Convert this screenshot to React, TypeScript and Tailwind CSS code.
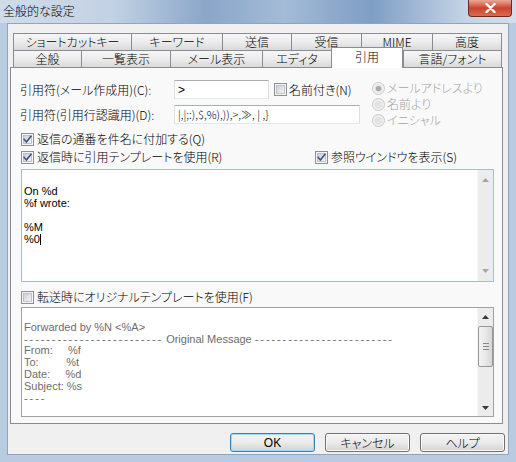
import React from "react";

const jp = "font-['Noto_Sans_CJK_JP',sans-serif] [font-feature-settings:'palt'] font-light";
const en = "font-['Liberation_Sans',Arial,sans-serif] font-normal";

const row1 = [
  { label: "ショートカットキー", w: "w-[118px]" },
  { label: "キーワード", w: "w-[91px]" },
  { label: "送信", w: "w-[69px]" },
  { label: "受信", w: "w-[70px]" },
  { label: "MIME", w: "w-[71px]" },
  { label: "高度", w: "w-[70px]" },
];

const row2 = [
  { label: "全般", w: "w-[68px]" },
  { label: "一覧表示", w: "w-[89px]" },
  { label: "メール表示", w: "w-[92px]" },
  { label: "エディタ", w: "w-[69px]" },
  { label: "引用", w: "w-[72px]", active: true },
  { label: "言語/フォント", w: "w-[99px]" },
];

function Check({ checked = false }: { checked?: boolean }) {
  return (
    <svg width="13" height="13" viewBox="0 0 13 13" className="shrink-0">
      <defs>
        <linearGradient id="cbfill" x1="0" y1="0" x2="1" y2="1">
          <stop offset="0" stopColor="#c9ced6" />
          <stop offset="1" stopColor="#f6f6f6" />
        </linearGradient>
      </defs>
      <rect x="0.5" y="0.5" width="12" height="12" fill="#f5f5f5" stroke="#8e8f8f" />
      <rect x="2.5" y="2.5" width="8" height="8" fill="url(#cbfill)" stroke="#b4b8be" strokeWidth="0.8" />
      {checked && (
        <path d="M3.2 6.4 L5.4 9 L9.9 3.4" fill="none" stroke="#3c528a" strokeWidth="1.6" strokeLinecap="square" />
      )}
    </svg>
  );
}

function Radio({ selected = false }: { selected?: boolean }) {
  return (
    <svg width="13" height="13" viewBox="0 0 13 13" className="shrink-0">
      <circle cx="6.5" cy="6.5" r="6" fill="#f2f2f2" stroke="#c8c8c8" />
      <circle cx="6.5" cy="6.5" r="4" fill="#e4e4e4" />
      {selected && <circle cx="6.5" cy="6.5" r="2.6" fill="#a8a8a8" />}
    </svg>
  );
}

function Arrow({ up = false, color = "#9a9a9a" }: { up?: boolean; color?: string }) {
  return (
    <svg width="7" height="4" viewBox="0 0 7 4">
      <path d={up ? "M0 4 L3.5 0 L7 4 Z" : "M0 0 L7 0 L3.5 4 Z"} fill={color} />
    </svg>
  );
}

function CheckRow({ checked, label }: { checked?: boolean; label: string }) {
  return (
    <div className="flex items-center gap-[3px] h-[18px]">
      <Check checked={checked} />
      <span className="text-[12px] text-black leading-none">{label}</span>
    </div>
  );
}

function Btn({ children, def = false }: { children: React.ReactNode; def?: boolean }) {
  return (
    <button
      className={`w-[85px] h-[19px] flex items-center justify-center rounded-[3px] border bg-gradient-to-b from-[#f3f3f3] via-[#ebebeb] to-[#d2d2d2] text-[12px] leading-none text-black ${
        def ? "border-[#3c7fb1] shadow-[inset_0_0_0_1px_#9fdcf7]" : "border-[#707070] shadow-[inset_0_0_0_1px_#fbfbfb]"
      }`}
    >
      {children}
    </button>
  );
}

export default function App() {
  return (
    <div className={`w-[516px] h-[462px] flex flex-col bg-[#b9cbe0] ${jp}`}>
      {/* title bar */}
      <div className="h-[23px] shrink-0 flex items-start justify-between bg-[linear-gradient(90deg,#d0dcea_0%,#c2d1e3_22%,#8aa6c8_40%,#a3bbd6_55%,#7f9ec4_72%,#c4d3e5_90%,#d2deeb_100%)]">
        <span className="pl-[3px] pt-[3px] text-[12px] leading-[16px] text-black">全般的な設定</span>
        <div className="mr-[4px] w-[44px] h-[17px] flex items-center justify-center rounded-b-[4px] border border-t-0 border-[#6f2a20] bg-gradient-to-b from-[#e9a896] via-[#c8442d] to-[#d86a50]">
          <svg width="11" height="10" viewBox="0 0 11 10">
            <path d="M1.5 1 L9.5 9 M9.5 1 L1.5 9" stroke="#ffffff" strokeWidth="2.4" strokeLinecap="round" />
          </svg>
        </div>
      </div>

      {/* client area */}
      <div className="flex-1 mx-[7px] mb-[7px] border border-[#8fa4bf] bg-[#f0f0f0] flex flex-col pt-[9px] pl-[2px]">
        {/* tabs */}
        <div className="ml-[3px] flex flex-col w-[489px]">
          <div className="flex h-[17px]">
            {row1.map((t) => (
              <div
                key={t.label}
                className={`${t.w} h-full flex items-center justify-center border-t border-l last:border-r border-[#898c95] bg-gradient-to-b from-[#f6f6f6] via-[#ececec] to-[#d9d9d9] text-[12px] leading-none text-black`}
              >
                {t.label}
              </div>
            ))}
          </div>
          <div className="flex items-end h-[17px]">
            {row2.map((t) =>
              t.active ? (
                <div
                  key={t.label}
                  className={`${t.w} h-[21px] -mb-px relative z-10 flex items-start justify-center pt-[2px] border-t border-x border-[#898c95] bg-white text-[12px] leading-[14px] text-black`}
                >
                  {t.label}
                </div>
              ) : (
                <div
                  key={t.label}
                  className={`${t.w} h-full flex items-center justify-center border-t border-l last:border-r border-[#898c95] bg-gradient-to-b from-[#f6f6f6] via-[#ececec] to-[#d9d9d9] text-[12px] leading-none text-black`}
                >
                  {t.label}
                </div>
              )
            )}
          </div>
        </div>

        {/* panel */}
        <div className="w-[493px] h-[357px] border border-[#898c95] bg-[#f9f9f9] pl-[10px] pt-[12px] flex flex-col">
          <div className="flex items-start">
            <div className="w-[351px] flex flex-col gap-[6px]">
              <div className="flex items-center h-[19px]">
                <span className="w-[154px] -ml-px text-[12px] leading-none text-black">引用符(メール作成用)(C):</span>
                <div className={`w-[95px] h-[19px] flex items-center px-[3px] bg-white border border-[#abadb3] border-x-[#dbdfe6] border-b-[#e3e9ef] text-[12px] ${en}`}>
                  &gt;
                </div>
                <div className="ml-[5px] flex items-center gap-[2px]">
                  <Check />
                  <span className="text-[12px] leading-none text-black">名前付き(N)</span>
                </div>
              </div>
              <div className="flex items-center h-[19px]">
                <span className="w-[154px] -ml-px text-[12px] leading-none text-black">引用符(引用行認識用)(D):</span>
                <div className={`w-[186px] h-[19px] flex items-center px-[3px] bg-white border border-[#abadb3] border-x-[#dbdfe6] border-b-[#e3e9ef] text-[11px] whitespace-pre text-black`}>
                  |,|;:),$,%),)),&gt;,≫, | ,{"}"}
                </div>
              </div>
            </div>
            <div className="flex flex-col">
              {[
                { l: "メールアドレスより", s: true },
                { l: "名前より", s: false },
                { l: "イニシャル", s: false },
              ].map((r) => (
                <div key={r.l} className="flex items-center gap-[2px] h-[16px]">
                  <Radio selected={r.s} />
                  <span className="text-[12px] leading-none text-[#a3a3a3]">{r.l}</span>
                </div>
              ))}
            </div>
          </div>

          <div className="mt-[2px]">
            <CheckRow checked label="返信の通番を件名に付加する(Q)" />
          </div>
          <div className="flex">
            <div className="w-[294px]">
              <CheckRow checked label="返信時に引用テンプレートを使用(R)" />
            </div>
            <CheckRow checked label="参照ウインドウを表示(S)" />
          </div>

          {/* reply template */}
          <div className="mt-[3px] w-[473px] h-[113px] flex border border-[#a7bbd3] bg-white">
            <div className={`flex-1 pl-[2px] pt-[3px] text-[11px] leading-[12px] text-black whitespace-pre ${en}`}>
              {"\nOn %d\n%f wrote:\n\n%M\n"}
              <span className="inline-flex items-center">
                %0<span className="inline-block w-px h-[11px] bg-black" />
              </span>
            </div>
            <div className="w-[16px] flex flex-col items-center justify-between py-[8px] bg-[#ececec] border-l border-[#f6f6f6]">
              <Arrow up color="#a6a6a6" />
              <Arrow color="#a6a6a6" />
            </div>
          </div>

          <div className="mt-[6px]">
            <CheckRow label="転送時にオリジナルテンプレートを使用(F)" />
          </div>

          {/* forward template */}
          <div className="mt-px w-[473px] h-[110px] flex border border-[#a0a0a0] bg-white">
            <div className={`flex-1 pl-[2px] pt-[2px] text-[11px] leading-[11.8px] text-[#6d6d6d] whitespace-pre overflow-hidden ${en}`}>
              {"\nForwarded by %N <%A>\n"}
              <span className="tracking-[1.9px]">-------------------------</span>
              {" Original Message "}
              <span className="tracking-[1.9px]">-------------------------</span>
              {"\nFrom:     %f\nTo:         %t\nDate:     %d\nSubject: %s\n"}
              <span className="tracking-[1.9px]">----</span>
            </div>
            <div className="w-[16px] flex flex-col items-center bg-[#ececec] border-l border-[#f6f6f6]">
              <div className="h-[17px] flex items-center justify-center">
                <Arrow up color="#3a3a3a" />
              </div>
              <div className="mt-[1px] w-[15px] h-[41px] rounded-[2px] border border-[#979797] bg-gradient-to-r from-[#f4f4f4] via-[#e8e8e8] to-[#d6d6d6] flex flex-col items-center justify-center gap-[2px]">
                <div className="w-[6px] h-px bg-[#8a8a8a]" />
                <div className="w-[6px] h-px bg-[#8a8a8a]" />
                <div className="w-[6px] h-px bg-[#8a8a8a]" />
              </div>
              <div className="flex-1" />
              <div className="h-[17px] flex items-center justify-center">
                <Arrow color="#3a3a3a" />
              </div>
            </div>
          </div>
        </div>

        {/* buttons */}
        <div className="mt-[9px] flex justify-end gap-[10px] pr-[3px]">
          <Btn def>
            <span className={en}>OK</span>
          </Btn>
          <Btn>キャンセル</Btn>
          <Btn>ヘルプ</Btn>
        </div>
      </div>
    </div>
  );
}
